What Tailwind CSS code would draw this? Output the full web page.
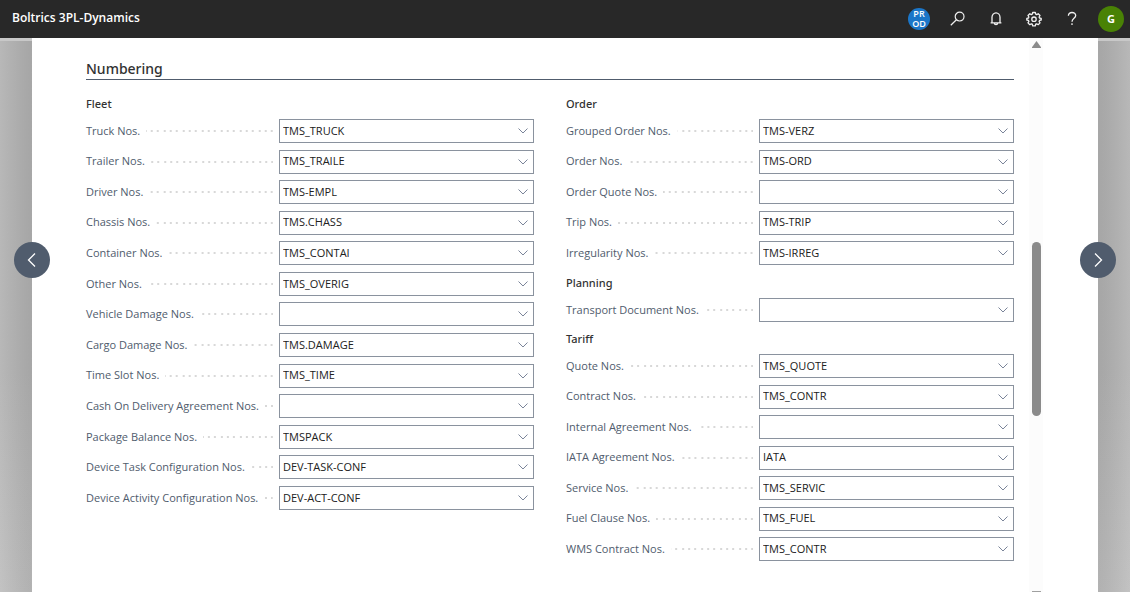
<!DOCTYPE html>
<html lang="en">
<head>
<meta charset="utf-8">
<title>Boltrics 3PL-Dynamics</title>
<script src="https://cdn.jsdelivr.net/npm/@tailwindcss/browser@4"></script>
</head>
<body class="flex h-screen flex-col overflow-hidden bg-[#b0b0b0] font-['Open_Sans','Noto_Sans',sans-serif] text-[11px] text-[#505c6d]">
  <header class="flex h-[38px] shrink-0 items-center justify-between bg-[#282828] pr-[6px] pl-3 text-white">
    <h1 class="pb-[2px] text-xs font-semibold">Boltrics 3PL-Dynamics</h1>
    <nav class="flex items-center" aria-label="Toolbar">
      <button class="mr-5 flex size-[22px] items-center justify-center rounded-full bg-[#1b76c8] text-center text-[9px] leading-[10px] font-semibold" aria-label="Environment: production">PR<br>OD</button>
      <button class="mr-[22px]" aria-label="Search"><svg class="size-4" viewBox="0 0 16 16" fill="none" stroke="#f0f0f0" stroke-width="1.2"><circle cx="9.600" cy="5.600" r="4.400"/><path d="M6.400 8.800.8 14.200"/></svg></button>
      <button class="mr-[22px]" aria-label="Notifications"><svg class="size-4" viewBox="0 0 16 16" fill="none" stroke="#f0f0f0" stroke-width="1.300"><path d="M4 11.600V6.200a4 4.400 0 0 1 8 0v5.400M2.600 11.800h10.800M6.400 12.200a1.600 1.400 0 0 0 3.200 0"/></svg></button>
      <button class="mr-[22px]" aria-label="Settings"><svg class="size-4" viewBox="0 0 16 16" fill="none" stroke="#f0f0f0" stroke-width="1.300" stroke-linejoin="round"><path d="M6.700 1.500h2.600l.4 1.700 1 .4 1.500-.9 1.800 1.800-.9 1.500.4 1 1.700.4v1.600l-1.700.4-.4 1 .9 1.500-1.800 1.800-1.500-.9-1 .4-.4 1.700H6.700l-.4-1.700-1-.4-1.500.9L2 11.900l.9-1.500-.4-1-1.700-.4V7.400L2.500 7l.4-1L2 4.500l1.800-1.800 1.500.9 1-.4z"/><circle cx="8" cy="8.200" r="2.200"/></svg></button>
      <button class="mr-[18px]" aria-label="Help"><svg class="size-4" viewBox="0 0 16 16" fill="none" stroke="#f0f0f0" stroke-width="1.300"><path d="M4.400 4.800C4.400 2.600 6 1.500 8 1.500s3.700 1.100 3.700 3.100C11.700 7.400 8 7.400 8 10.800"/><path d="M8 12.200v1.700"/></svg></button>
      <button class="flex size-[26px] items-center justify-center rounded-full bg-[#498205] text-[11px] font-bold" aria-label="Account">G</button>
    </nav>
  </header>

  <div class="relative flex min-h-0 flex-1 border-t-3 border-[#c8c8c8] bg-linear-to-b from-[#b0b0b0] from-60% to-[#bcbcbc]">
    <div class="w-8 shrink-0 bg-linear-to-r from-white/10 to-black/5"></div>
    <main class="-mt-[3px] flex min-w-0 flex-1 bg-white">
      <div class="min-w-0 flex-1 overflow-hidden pt-[21px] pr-[15px] pl-[54px]">
        <h2 class="border-b border-[#505c6d] font-['Noto_Sans',sans-serif] text-sm leading-5 font-medium text-[#323232]">Numbering</h2>
        <form class="mt-4 grid grid-cols-2 gap-x-8">
          <div id="fleet"></div>
          <div id="other"></div>
        </form>
      </div>
      <div class="relative w-[14px] shrink-0 bg-[#fcfcfc]" aria-hidden="true">
        <svg class="absolute top-[3px] left-[3px] h-2 w-[9px]" viewBox="0 0 9 8"><path d="M4.500 0 9 6.200V7H0v-.8z" fill="#8b8b8b"/></svg>
        <div class="absolute top-[204px] left-[3px] h-[174px] w-[9px] rounded-full bg-[#8b8b8b]"></div>
        <div class="absolute bottom-0 left-[3px] h-px w-[9px] bg-[#a0a0a0]"></div>
      </div>
      <div class="w-[55px] shrink-0"></div>
    </main>
    <div class="w-8 shrink-0 bg-linear-to-l from-white/10 to-black/5"></div>
    <button class="absolute top-[201px] left-[14px] flex size-9 items-center justify-center rounded-full bg-[#505c6d]" aria-label="Previous"><svg class="size-4" viewBox="0 0 16 16" fill="none" stroke="#fff" stroke-width="1.300"><path d="M11 1.500 4.500 8 11 14.500"/></svg></button>
    <button class="absolute top-[201px] right-[14px] flex size-9 items-center justify-center rounded-full bg-[#505c6d]" aria-label="Next"><svg class="size-4" viewBox="0 0 16 16" fill="none" stroke="#fff" stroke-width="1.300"><path d="M5 1.500 11.500 8 5 14.500"/></svg></button>
  </div>

  <script>
    const field = ([label, value], id) => `
      <div class="flex h-6 items-center">
        <div class="flex w-[193px] shrink-0 items-center pr-[6px]">
          <label for="${id}" class="shrink-0 whitespace-nowrap">${label}</label>
          <span class="ml-[6px] h-[2px] flex-1 bg-[linear-gradient(to_left,#d8d8d8_2px,transparent_2px,transparent_6px,#d8d8d8_6px,#d8d8d8_8px,transparent_8px,transparent_12px,#d8d8d8_12px,#d8d8d8_14px,transparent_14px)] bg-[length:19px_2px] bg-right bg-repeat-x"></span>
        </div>
        <div class="relative min-w-0 flex-1">
          <select id="${id}" class="block h-6 w-full appearance-none border border-[#8a929e] bg-white pr-6 pl-[3px] text-[11px] text-[#212121]"><option>${value}</option></select>
          <svg class="pointer-events-none absolute top-[9px] right-[6px] h-[6px] w-[10px]" viewBox="0 0 10 6" fill="none" stroke="#7a8499"><path d="M.5.5 5 5 9.500.5"/></svg>
        </div>
      </div>`;
    const title = t => `<h3 class="h-4 font-['Noto_Sans',sans-serif] leading-4 font-medium text-[#323232]">${t}</h3>`;
    const rows = (items, cls, key) => `<div class="${cls}">${items.map((f, i) => field(f, key + i)).join('')}</div>`;

    document.getElementById('fleet').innerHTML = title('Fleet') + rows([
      ['Truck Nos.', 'TMS_TRUCK'], ['Trailer Nos.', 'TMS_TRAILE'], ['Driver Nos.', 'TMS-EMPL'],
      ['Chassis Nos.', 'TMS.CHASS'], ['Container Nos.', 'TMS_CONTAI'], ['Other Nos.', 'TMS_OVERIG'],
      ['Vehicle Damage Nos.', ''], ['Cargo Damage Nos.', 'TMS.DAMAGE'], ['Time Slot Nos.', 'TMS_TIME'],
      ['Cash On Delivery Agreement Nos.', ''], ['Package Balance Nos.', 'TMSPACK'],
      ['Device Task Configuration Nos.', 'DEV-TASK-CONF'], ['Device Activity Configuration Nos.', 'DEV-ACT-CONF']
    ], 'mt-[7px] flex min-h-[391px] flex-col justify-between', 'fleet-');

    document.getElementById('other').innerHTML =
      title('Order') + rows([
        ['Grouped Order Nos.', 'TMS-VERZ'], ['Order Nos.', 'TMS-ORD'], ['Order Quote Nos.', ''],
        ['Trip Nos.', 'TMS-TRIP'], ['Irregularity Nos.', 'TMS-IRREG']
      ], 'mt-[7px] mb-[10px] flex min-h-[146px] flex-col justify-between', 'order-') +
      title('Planning') + rows([['Transport Document Nos.', '']], 'mt-[7px] mb-[9px]', 'planning-') +
      title('Tariff') + rows([
        ['Quote Nos.', 'TMS_QUOTE'], ['Contract Nos.', 'TMS_CONTR'], ['Internal Agreement Nos.', ''],
        ['IATA Agreement Nos.', 'IATA'], ['Service Nos.', 'TMS_SERVIC'], ['Fuel Clause Nos.', 'TMS_FUEL'],
        ['WMS Contract Nos.', 'TMS_CONTR']
      ], 'mt-[7px] flex min-h-[207px] flex-col justify-between', 'tariff-');
  </script>
</body>
</html>
